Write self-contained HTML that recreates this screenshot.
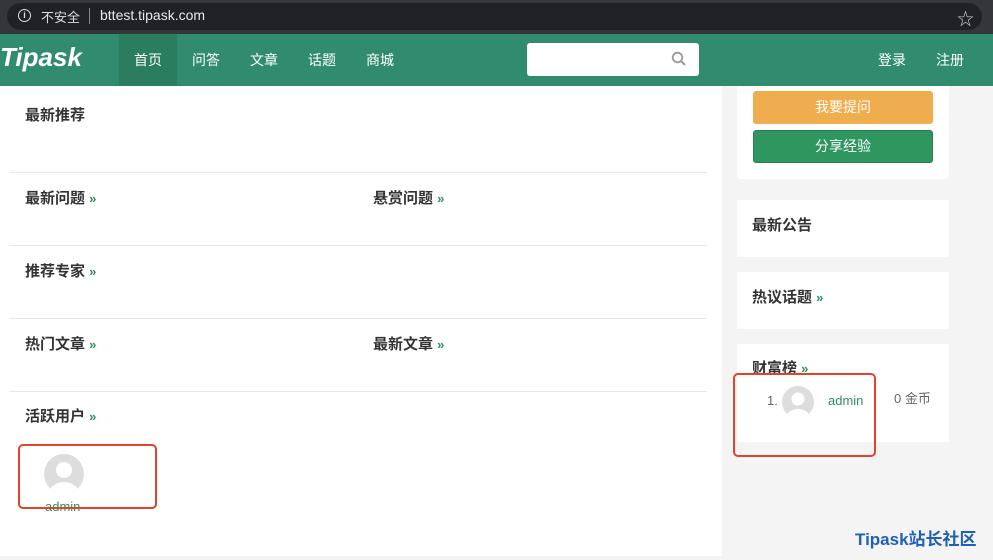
<!DOCTYPE html>
<html><head><meta charset="utf-8"><style>
*{margin:0;padding:0;box-sizing:border-box}
body{width:993px;height:560px;overflow:hidden;background:#f4f4f4;font-family:"Liberation Sans","Noto Sans CJK SC",sans-serif;position:relative}
.a{position:absolute}
.top{left:0;top:0;width:993px;height:34px;background:#35363a}
.pill{left:7px;top:3px;width:975px;height:27px;border-radius:14px;background:#202124}
.nav{left:0;top:34px;width:993px;height:52px;background:#318c6f}
.nv{color:#fff;font-size:14px;top:50px}
.h{font-size:15px;font-weight:bold;color:#333}
.g{color:#2e8f5e;font-size:13px;font-weight:bold}
.ln{height:1px;background:#e8e8e8;left:9px;width:698px}
.card{background:#fff}
.av{border-radius:50%;background:#ddd;overflow:hidden}
.red{border:2px solid #e0452a;border-radius:5px}
</style></head><body>
<div class="a top"></div>
<div class="a pill"></div>
<div class="a" style="left:18px;top:9px;width:13px;height:13px;border:1.5px solid #ddd;border-radius:50%;color:#ddd;font-size:9px;line-height:10px;text-align:center;font-weight:bold">i</div>
<div class="a" style="left:41px;top:7px;color:#ddd;font-size:13px">不安全</div>
<div class="a" style="left:89px;top:8px;width:1px;height:16px;background:#888"></div>
<div class="a" style="left:100px;top:7px;color:#e8e8e8;font-size:14px">bttest.tipask.com</div>
<div class="a" style="left:957px;top:5px;color:#ccc;font-size:17px">☆</div>
<div class="a nav"></div>
<div class="a" style="left:0;top:42px;color:#fff;font-size:26px;font-style:italic;font-weight:bold">Tipask</div>
<div class="a" style="left:119px;top:34px;width:58px;height:52px;background:#2a7d5f"></div>
<div class="a nv" style="left:134px">首页</div>
<div class="a nv" style="left:192px">问答</div>
<div class="a nv" style="left:250px">文章</div>
<div class="a nv" style="left:308px">话题</div>
<div class="a nv" style="left:366px">商城</div>
<div class="a" style="left:527px;top:43px;width:172px;height:33px;background:#fff;border-radius:3px"></div>
<svg class="a" style="left:671px;top:51px" width="16" height="16"><circle cx="6.5" cy="6.5" r="4.8" stroke="#999" stroke-width="1.8" fill="none"/><line x1="10" y1="10" x2="14" y2="14" stroke="#999" stroke-width="2"/></svg>
<div class="a nv" style="left:878px">登录</div>
<div class="a nv" style="left:936px">注册</div>

<div class="a" style="left:0;top:86px;width:722px;height:470px;background:#fff"></div>
<div class="a h" style="left:25px;top:104px">最新推荐</div>
<div class="a ln" style="top:172px"></div>
<div class="a h" style="left:25px;top:187px">最新问题 <span class="g">»</span></div>
<div class="a h" style="left:373px;top:187px">悬赏问题 <span class="g">»</span></div>
<div class="a ln" style="top:245px"></div>
<div class="a h" style="left:25px;top:260px">推荐专家 <span class="g">»</span></div>
<div class="a ln" style="top:318px"></div>
<div class="a h" style="left:25px;top:333px">热门文章 <span class="g">»</span></div>
<div class="a h" style="left:373px;top:333px">最新文章 <span class="g">»</span></div>
<div class="a ln" style="top:391px"></div>
<div class="a h" style="left:25px;top:405px">活跃用户 <span class="g">»</span></div>
<div class="a av" style="left:44px;top:454px;width:40px;height:40px"><svg width="40" height="40"><circle cx="20" cy="16" r="8" fill="#fff"/><ellipse cx="20" cy="40" rx="15" ry="12" fill="#fff"/></svg></div>
<div class="a" style="left:45px;top:499px;color:#2e8f5e;font-size:13px">admin</div>
<div class="a red" style="left:18px;top:444px;width:139px;height:65px"></div>

<div class="a card" style="left:737px;top:86px;width:212px;height:93px;border-radius:0 0 4px 4px"></div>
<div class="a" style="left:753px;top:91px;width:180px;height:33px;background:#f0ad4e;border-radius:3px;color:#fff;font-size:14px;text-align:center;line-height:33px">我要提问</div>
<div class="a" style="left:753px;top:130px;width:180px;height:33px;background:#2f9660;border-radius:3px;border:1px solid #27804f;color:#fff;font-size:14px;text-align:center;line-height:31px">分享经验</div>
<div class="a card" style="left:737px;top:200px;width:212px;height:57px"></div>
<div class="a h" style="left:752px;top:214px">最新公告</div>
<div class="a card" style="left:737px;top:272px;width:212px;height:57px"></div>
<div class="a h" style="left:752px;top:286px">热议话题 <span class="g">»</span></div>
<div class="a card" style="left:737px;top:344px;width:212px;height:98px"></div>
<div class="a h" style="left:752px;top:357px">财富榜 <span class="g">»</span></div>
<div class="a" style="left:767px;top:393px;color:#666;font-size:13px">1.</div>
<div class="a av" style="left:782px;top:386px;width:32px;height:32px"><svg width="32" height="32"><circle cx="16" cy="13" r="6.5" fill="#fff"/><ellipse cx="16" cy="32" rx="12" ry="9" fill="#fff"/></svg></div>
<div class="a" style="left:828px;top:393px;color:#2e8f5e;font-size:13px">admin</div>
<div class="a" style="left:894px;top:388px;color:#666;font-size:13px">0 金币</div>
<div class="a red" style="left:733px;top:373px;width:143px;height:84px"></div>
<div class="a" style="left:855px;top:525px;color:#1f5fb8;font-size:17px;font-weight:bold">Tipask站长社区</div>
</body></html>
